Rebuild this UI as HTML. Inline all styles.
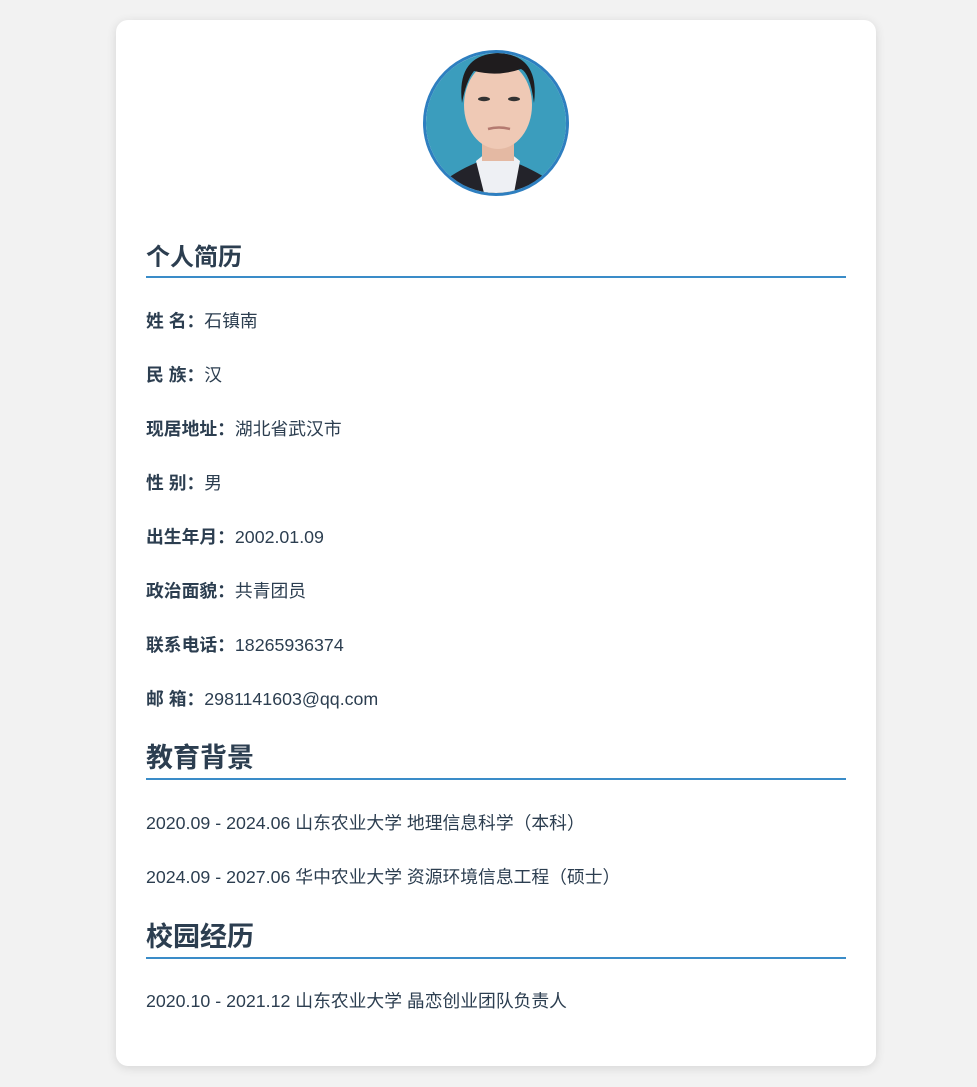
<!DOCTYPE html>
<html><head><meta charset="utf-8"><style>
body{margin:0;background:#f2f2f2;font-family:"Liberation Sans","Noto Sans CJK SC",sans-serif;color:#2c3e50;}
.card{position:absolute;left:116px;top:20px;width:760px;height:1046px;background:#fff;border-radius:12px;box-shadow:0 2px 10px rgba(0,0,0,0.12);}
.av{position:absolute;left:307px;top:30px;width:140px;height:140px;border:3px solid #2e7fc0;border-radius:50%;overflow:hidden;}
.h{position:absolute;left:30px;width:700px;border-bottom:2px solid #3a8cc8;font-weight:bold;}
.r{position:absolute;left:30px;font-size:17.8px;line-height:20px;white-space:nowrap;}
.r b{font-weight:bold;}
</style></head><body>
<div class="card">
<div class="av"><svg width="140" height="140" viewBox="0 0 140 140">
<rect width="140" height="140" fill="#3b9dbd"/>
<path d="M15 130 Q35 115 55 108 L85 108 Q105 115 128 130 L130 140 L10 140Z" fill="#23232a"/>
<path d="M50 108 L58 140 L88 140 L94 108 L84 100 L60 100Z" fill="#eef0f4"/>
<rect x="56" y="80" width="32" height="28" fill="#e4b9a3"/>
<ellipse cx="72" cy="52" rx="34" ry="44" fill="#efc9b5"/>
<path d="M36 50 Q30 2 72 0 Q114 2 108 50 Q104 20 95 16 Q72 24 48 18 Q40 28 36 50Z" fill="#1f1c1e"/>
<ellipse cx="58" cy="46" rx="6" ry="2.2" fill="#333"/><ellipse cx="88" cy="46" rx="6" ry="2.2" fill="#333"/>
<path d="M62 76 Q73 73 84 76" stroke="#b47a70" stroke-width="2.5" fill="none"/>
</svg></div>
<div class="h" style="top:220px;font-size:24px;line-height:36px;height:36px;">个人简历</div>
<div class="r" style="top:291px"><b>姓 名：</b>石镇南</div>
<div class="r" style="top:345px"><b>民 族：</b>汉</div>
<div class="r" style="top:399px"><b>现居地址：</b>湖北省武汉市</div>
<div class="r" style="top:453px"><b>性 别：</b>男</div>
<div class="r" style="top:507px"><b>出生年月：</b>2002.01.09</div>
<div class="r" style="top:561px"><b>政治面貌：</b>共青团员</div>
<div class="r" style="top:615px"><b>联系电话：</b>18265936374</div>
<div class="r" style="top:669px"><b>邮 箱：</b>2981141603@qq.com</div>
<div class="h" style="top:718px;font-size:27px;line-height:40px;height:40px;">教育背景</div>
<div class="r" style="top:793px">2020.09 - 2024.06 山东农业大学 地理信息科学（本科）</div>
<div class="r" style="top:847px">2024.09 - 2027.06 华中农业大学 资源环境信息工程（硕士）</div>
<div class="h" style="top:897px;font-size:27px;line-height:40px;height:40px;">校园经历</div>
<div class="r" style="top:971px">2020.10 - 2021.12 山东农业大学 晶恋创业团队负责人</div>
</div>
</body></html>
